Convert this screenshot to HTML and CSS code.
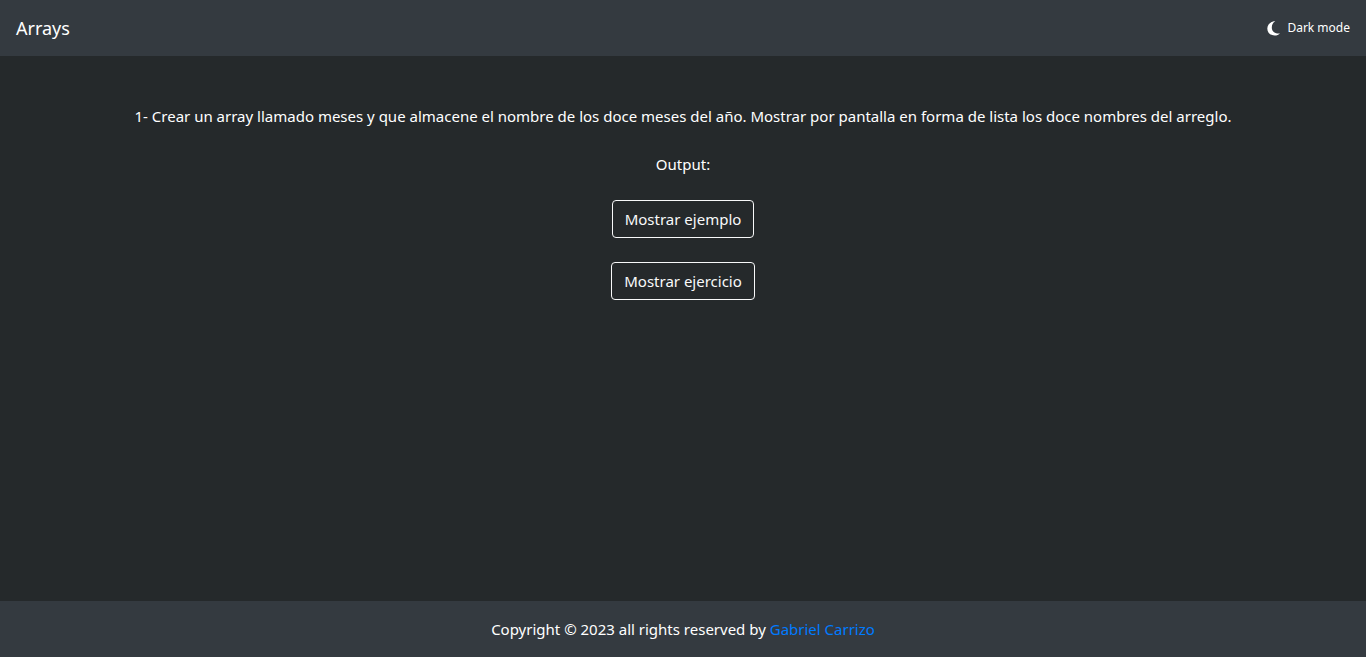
FILE: index.html
```html
<!DOCTYPE html>
<html lang="es">
<head>
<meta charset="utf-8">
<meta name="viewport" content="width=device-width, initial-scale=1">
<title>Arrays</title>
<link rel="stylesheet" href="styles.css">
</head>
<body class="page">
<header class="navbar">
<a class="brand" href="#">Arrays</a>
<button class="theme-toggle" type="button">
<svg class="moon" viewBox="0 0 13 15" aria-hidden="true"><path d="M8.300.3C3.700.3.300 3.400.300 7.400c0 4.200 3.100 7.100 7.300 7.100 2.300 0 4.200-.800 5.400-2.300-.900.200-1.800.300-2.600.200C6.900 12 4.800 9.600 4.800 6.400c0-2.600 1.300-4.900 3.500-6.100z"/></svg>
<span>Dark mode</span>
</button>
</header>
<main class="content">
<p class="statement">1- Crear un array llamado meses y que almacene el nombre de los doce meses del año. Mostrar por pantalla en forma de lista los doce nombres del arreglo.</p>
<p class="statement">Output:</p>
<button class="btn" type="button">Mostrar ejemplo</button>
<button class="btn" type="button">Mostrar ejercicio</button>
</main>
<footer class="footer">
<p class="copyright">Copyright © 2023 all rights reserved by <a class="author" href="#">Gabriel Carrizo</a></p>
</footer>
</body>
</html>
```
FILE: styles.css
```css
* { box-sizing: border-box; }
.page {
  display: flex;
  flex-direction: column;
  min-height: 100vh;
  margin: 0;
  background: #25292b;
  color: #fff;
  font: 15px/24px "Segoe UI", "Noto Sans", "Open Sans", sans-serif;
}
.navbar {
  display: flex;
  align-items: center;
  justify-content: space-between;
  min-height: 56px;
  padding: 8px 16px;
  background: #343a40;
}
.brand { color: #fff; font-size: 18px; line-height: 30px; text-decoration: none; }
.theme-toggle {
  display: flex;
  align-items: center;
  gap: 7px;
  padding: 0;
  border: 0;
  background: none;
  color: #fff;
  font: inherit;
  font-size: 12px;
}
.moon { width: 13px; height: 15px; fill: currentColor; }
.content {
  display: flex;
  flex: 1;
  flex-direction: column;
  align-items: center;
  gap: 24px;
  padding: 48px 16px;
  text-align: center;
}
.statement { margin: 0; }
.btn {
  padding: 6px 12px;
  border: 1px solid #f8f9fa;
  border-radius: 4px;
  background: transparent;
  color: #f8f9fa;
  font: inherit;
}
.footer { padding: 16px; background: #343a40; text-align: center; }
.copyright { margin: 0; }
.author { color: #007bff; text-decoration: none; }
```
